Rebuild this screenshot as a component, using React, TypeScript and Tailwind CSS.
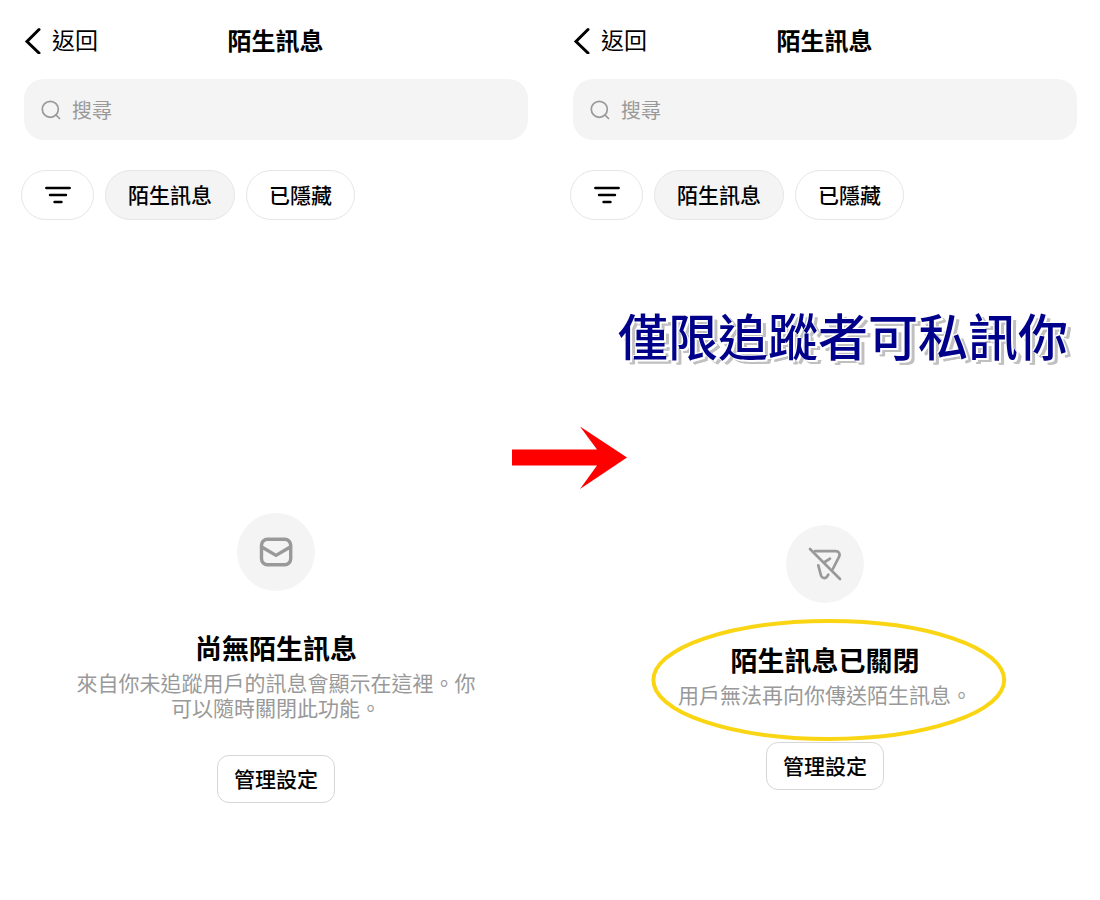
import type { ReactNode } from 'react';

function BackIcon() {
  return (
    <svg width="18" height="28" viewBox="0 0 18 28" fill="none" stroke="#000" strokeWidth="3" strokeLinecap="round" strokeLinejoin="miter" aria-hidden="true">
      <path d="M16 3.500 4 15.500 16 27" />
    </svg>
  );
}

function SearchIcon() {
  return (
    <svg className="shrink-0" width="20" height="20" viewBox="0 0 20 20" fill="none" stroke="#999" strokeWidth="1.7" strokeLinecap="round" aria-hidden="true">
      <circle cx="9.3" cy="9.3" r="8" />
      <path d="m15 15 3.500 3.500" />
    </svg>
  );
}

function FilterIcon() {
  return (
    <svg width="28" height="20" viewBox="0 0 28 20" fill="none" stroke="#000" strokeWidth="2.4" strokeLinecap="round" aria-hidden="true">
      <path d="M2.300 3h23.400M6 10h16M10.500 17h7" />
    </svg>
  );
}

function MailIcon() {
  return (
    <svg width="34" height="32" viewBox="0 0 34 32" fill="none" stroke="#999" strokeWidth="3.4" strokeLinejoin="round" aria-hidden="true">
      <rect x="2.500" y="3.200" width="29.200" height="25.600" rx="6" />
      <path d="M3.200 11.200 17 19.400l13.800-8.200" />
    </svg>
  );
}

function SendOffIcon() {
  return (
    <svg width="36" height="36" viewBox="0 0 36 36" fill="none" stroke="#999" strokeWidth="2.7" strokeLinecap="round" strokeLinejoin="round" aria-hidden="true">
      <path d="M3 3 33 33" />
      <path d="M8 5.200H28.500C32 5.200 33.500 7.700 32 10.800L25.800 23" />
      <path d="M17 16.500 23 12.700" />
      <path d="M11.300 19.300 14 29.500C14.800 32.400 18.300 32.900 20 30.600L21.300 28.700" />
    </svg>
  );
}

interface PanelProps {
  id: string;
  icon: ReactNode;
  heading: string;
  description: string;
  highlighted?: boolean;
}

const chip = 'flex h-[50px] items-center justify-center rounded-full border border-[#e6e6e6] text-[21px] font-medium';

function Panel({ id, icon, heading, description, highlighted }: PanelProps) {
  return (
    <section className="flex flex-col">
      <header className="grid grid-cols-[1fr_auto_1fr] items-center py-0.5 pr-[21px] pl-[23px]">
        <button type="button" className="flex h-[75px] items-center gap-[11px] text-[23px]">
          <BackIcon />
          返回
        </button>
        <h1 className="text-[24px] font-bold">陌生訊息</h1>
      </header>

      <div className="pr-[21px] pl-6">
        <label htmlFor={id} className="flex h-[61px] items-center gap-[11px] rounded-[20px] bg-[#f4f4f4] px-[17px]">
          <SearchIcon />
          <input
            id={id}
            type="search"
            aria-label="搜尋"
            placeholder="搜尋"
            className="min-w-0 flex-1 bg-transparent text-[20px] outline-none placeholder:text-[#999]"
          />
        </label>
      </div>

      <div className="mt-[30px] flex gap-[11px] px-[21px]">
        <button type="button" aria-label="篩選" className={`${chip} w-[73px]`}>
          <FilterIcon />
        </button>
        <button type="button" className={`${chip} bg-[#f4f4f4] px-[22px]`}>陌生訊息</button>
        <button type="button" className={`${chip} px-[22px]`}>已隱藏</button>
      </div>

      <div className="flex flex-1 flex-col items-center justify-center pt-[195px] pr-[21px] pl-6 text-center">
        <div className="flex size-[78px] items-center justify-center rounded-full bg-[#f4f4f4]">{icon}</div>
        <div className="relative mt-[41px]">
          <h2 className="text-[27px] leading-8 font-bold">{heading}</h2>
          <p className="mt-1.5 max-w-[400px] text-[21px] leading-[25px] text-[#999]">{description}</p>
          {highlighted && (
            <svg className="absolute -top-[26px] -right-9 -left-[30px] h-[124px] w-[calc(100%+64px)] overflow-visible" aria-hidden="true">
              <ellipse cx="50.5%" cy="50%" rx="49%" ry="59" fill="none" stroke="#fad514" strokeWidth="4" />
            </svg>
          )}
        </div>
        <button type="button" className="mt-[35px] h-12 rounded-xl border border-[#d6d6d6] px-4 text-[21px] font-medium">
          管理設定
        </button>
      </div>
    </section>
  );
}

export default function App() {
  return (
    <main
      lang="zh-Hant"
      className="relative grid min-h-screen grid-cols-2 bg-white pr-0.5 font-['Noto_Sans_CJK_TC',sans-serif] text-black"
    >
      <Panel
        id="search-open"
        icon={<MailIcon />}
        heading="尚無陌生訊息"
        description="來自你未追蹤用戶的訊息會顯示在這裡。你可以隨時關閉此功能。"
      />
      <Panel
        id="search-closed"
        icon={<SendOffIcon />}
        heading="陌生訊息已關閉"
        description="用戶無法再向你傳送陌生訊息。"
        highlighted
      />

      <p className="absolute top-[298px] right-8 text-[50px] leading-[72px] font-medium whitespace-nowrap text-[#00008b] [text-shadow:1px_1px_0_#fff,-1px_-1px_0_#fff,2px_2px_0_#fff,4px_4px_0_#c0c0c0,5px_4px_0_#c0c0c0]">
        僅限追蹤者可私訊你
      </p>

      <svg className="absolute top-[426px] left-[512px]" width="116" height="64" viewBox="0 0 116 64" fill="#ff0000" aria-hidden="true">
        <path d="M0 23.500H85L68 0.500 115 31.500 68 63 85 39.500H0Z" />
      </svg>
    </main>
  );
}
